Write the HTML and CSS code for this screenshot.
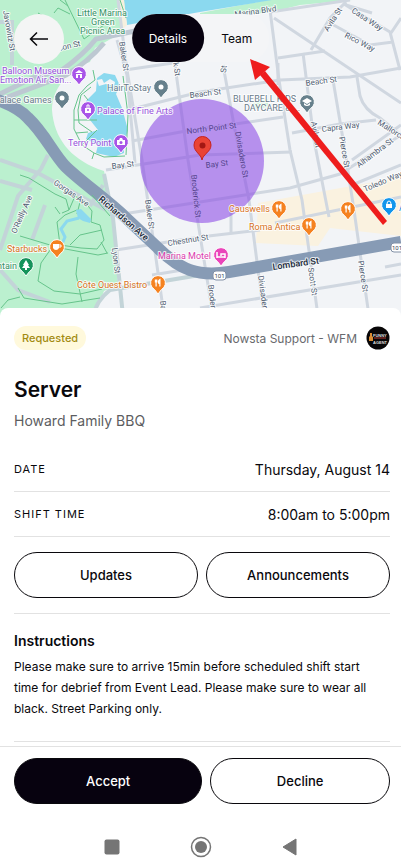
FILE: index.html
```html
<!DOCTYPE html>
<html lang="en">
<head>
<meta charset="utf-8">
<meta name="viewport" content="width=device-width, initial-scale=1">
<title>Shift details</title>
<link rel="stylesheet" href="styles.css">
</head>
<body>
<header class="hero">
  <svg class="map" viewBox="0 0 401 316" role="img" aria-label="Map of the shift location">
    <defs>
      <g id="fork"><path d="M-2.600 -3.500v3M-1.200 -3.500v3M-1.900 -3.500v7M1.900 3.500v-7c-1.500 1-1.500 3-1 4h1" fill="none" stroke="#fff" stroke-width="1.200"/></g>
      <path id="pin" d="M0 11L-3.500 6.500A7.400 7.400 0 1 1 3.500 6.500Z"/>
    </defs>
    <rect width="401" height="316" fill="#f2f4f7"/>
    <!-- parks, sand and water -->
    <path class="park" d="M0 0H126L121 33L95 48L90 62C70 68 52 88 52 110C54 138 70 158 98 169L104 171L113 216L118 285L104 291L94 316H0Z"/>
    <path class="park" d="M268 0H352L300 5L272 12L200 20V13Z"/>
    <path class="water" d="M124 0H272L200 12L127 25Z"/>
    <path d="M124 0L127 25L122 30L119 0Z" fill="#f6f0df"/>
    <path class="sand" d="M258 203L401 177V236L330 228L318 246L256 243Z"/>
    <path d="M252 102l16-3v8l-12 2z" fill="#cdf3da"/>
    <path class="water" d="M97 78L104 73L115 75L120 86L116 94L122 108L128 130L124 143L124 153L114 157L96 153L98 145L86 139L88 133L98 130L90 120L86 101L96 91Z"/>
    <path d="M97 80l5-1 2 4 6-4 5 3-1 4-8-2-7 2z" fill="#f2f4f7"/>
    <!-- streets -->
    <g class="street">
      <path d="M118 0L127 70L142 160L163 308M117 40L127 75L135 163M175 65L188 160L213 316M223 65L234 125L249 200L264 316M270 10L279 80L290 150L302 200L318 316M303 53L314 140L329 217M333 80L344 145L354 210L369 316"/>
      <path d="M125 70L173 63M128 110L200 92L280 80L350 77L401 68M132 141L186 131L235 124L283 117M106 170L200 155L292 152M110 216L200 202L290 188L340 174L401 135M116 250L200 237L260 230M152 275L195 268M292 133L340 124L376 120M275 223L401 197M200 308L401 275M278 58L325 51M270 12L350 0M231 232V210"/>
      <path d="M274 18L401 103M311 50L330 18L344 4L352 9L390 32L400 70M344 0L346 5L372 13M330 23L370 45L393 42M391 33L401 18M357 77L360 96Q364 110 380 118L401 135M352 160L401 125M352 185L401 165M278 85V63M385 267L401 264"/>
    </g>
    <g class="lane">
      <path d="M0 160L38 173L106 210M0 181L32 190M0 250L18 196L41 169L48 155M32 240L45 205M-5 264L18 290L50 302M94 316Q95 302 110 290L200 275M104 174L113 218L123 316M103 185L90 206M0 22H12V65"/>
    </g>
    <path class="road" d="M0 94L32 78L62 70Q83 55 96 39L140 30M0 100L66 75Q88 62 104 43"/>
    <path class="highway" d="M-5 99Q18 107 28 118C44 133 53 153 65 166C80 181 105 198 125 217L158 248C180 270 198 277 229 272L401 242"/>
    <g class="path">
      <path d="M65 0L84 39L104 25M54 13L58 8L70 14M60 0L68 6M38 13L50 20M20 175L29 178L55 194L66 199L69 210L62 213M69 210L75 196L85 202L92 211L91 222L100 225L104 240L97 249L81 248L60 245L57 222L65 215L77 210M77 214L80 202M20 236L60 248L98 255L108 253M70 245L80 235L102 230M101 242L107 253M53 246L41 263L38 281L54 291L80 294L102 289M78 257L76 274L82 302M18 288L24 298L62 304L100 298M55 207L60 214M92 195L110 216M120 0L126 18M1 308L8 300L20 297"/>
      <path d="M93 70L95 80L87 86L79 95L74 110L74 129L82 145L94 153L92 159M91 87L81 95L78 110L79 123L92 132M74 120L97 120M82 145L97 130M94 153L104 157L125 156M123 76L128 115L126 155M84 95l4 5M76 133L88 132"/>
    </g>
    <path class="water" d="M76 210L81 209L91 219L90 223L83 221L78 218Z"/>
    <path d="M79 218L67 221L61 229L65 237L62 244" fill="none" stroke="#8bd9ef" stroke-width="3"/>
    <!-- work area -->
    <circle cx="202" cy="161" r="62" fill="#8a48e6" fill-opacity=".58"/>
    <path d="M202 160C201 154 194 152 194 145A8.500 8.500 0 1 1 211 145C211 152 203 154 202 160Z" fill="#ea4335" stroke="#c5221f"/>
    <circle cx="202.500" cy="145.500" r="3" fill="#a31713"/>
    <!-- street names -->
    <g class="names">
      <text transform="translate(3 11) rotate(80)">Javowitz St</text>
      <text transform="translate(59 51) rotate(-13)">son St</text>
      <text transform="translate(119 42) rotate(81)">Baker St</text>
      <text transform="translate(173 63) rotate(80)">k St</text>
      <text transform="translate(226 73) rotate(-85)">St</text>
      <text transform="translate(235 17) rotate(-8)">Marina Blvd</text>
      <text transform="translate(328 32) rotate(-57)">Avila St</text>
      <text transform="translate(351 12) rotate(33)">Casa Way</text>
      <text transform="translate(344 37) rotate(27)">Rico Way</text>
      <text transform="translate(190 98) rotate(-7)">Beach St</text>
      <text transform="translate(306 86) rotate(-8)">Beach St</text>
      <g class="inside">
        <text transform="translate(187 134) rotate(-7)">North Point St</text>
        <text transform="translate(235 132) rotate(80)">Divisadero St</text>
        <text transform="translate(206 168) rotate(-7)">Bay St</text>
        <text transform="translate(191 175) rotate(84)">Broderick St</text>
      </g>
      <text transform="translate(112 169) rotate(-7)">Bay St</text>
      <text transform="translate(311 122) rotate(80)">Avila St</text>
      <text transform="translate(322 132) rotate(-7)">Capra Way</text>
      <text transform="translate(339 137) rotate(80)">Pierce St</text>
      <text transform="translate(377 124) rotate(32)">Mallorca</text>
      <text transform="translate(359 168) rotate(-37)">Alhambra St</text>
      <text transform="translate(365 192) rotate(-23)">Toledo Way</text>
      <text transform="translate(53 184) rotate(34)">Gorgas Ave</text>
      <text transform="translate(16 234) rotate(-66)">O'Reilly Ave</text>
      <text class="major" transform="translate(98 200) rotate(41)">Richardson Ave</text>
      <text transform="translate(145 200) rotate(82)">Baker St</text>
      <text transform="translate(168 246) rotate(-9)">Chestnut St</text>
      <text transform="translate(112 248) rotate(84)">Lyon St</text>
      <text class="major" transform="translate(273 270) rotate(-8)">Lombard St</text>
      <text transform="translate(160 301) rotate(84)">Baker St</text>
      <text transform="translate(208 285) rotate(83)">Broderick St</text>
      <text transform="translate(258 276) rotate(82)">Divisadero St</text>
      <text transform="translate(308 268) rotate(82)">Scott St</text>
      <text transform="translate(358 261) rotate(81)">Pierce St</text>
    </g>
    <!-- places -->
    <g class="places">
      <g class="green"><text x="77" y="16">Little Marina</text><text x="91" y="25">Green</text><text x="80" y="34">Picnic Area</text><text x="-18" y="269">Fountain</text></g>
      <g class="purple"><text x="2" y="74">Balloon Museum</text><text x="0" y="83">Emotion Air San...</text><text x="97" y="114">Palace of Fine Arts</text><text x="68" y="146">Terry Point</text></g>
      <g class="gray"><text x="107" y="91">HairToStay</text><text x="-6" y="103">Palace Games</text><text x="233" y="102">BLUEBELL KIDS</text><text x="244" y="111">DAYCARE &amp; ...</text></g>
      <g class="orange"><text x="7" y="252">Starbucks</text><text x="77" y="288">Côte Ouest Bistro</text><text x="229" y="212">Causwells</text><text x="249" y="230">Roma Antica</text></g>
      <text class="pink" x="158" y="259">Marina Motel</text><text class="blue" x="399" y="211">Apple</text>
    </g>
    <g class="pins">
      <g transform="translate(79 74)"><use href="#pin" fill="#a855e8"/><path d="M-4-1L0-4L4-1ZM-3 0h6v4h-6Z" fill="#fff"/><path d="M-1 4V1h2v3" fill="#a855e8"/></g>
      <g transform="translate(88 109)"><use href="#pin" fill="#a855e8"/><path d="M-3-1h6v5h-6Z" fill="#fff"/><path d="M-1-1v-3h2v3" fill="none" stroke="#fff"/><circle cy="1" r="1" fill="#a855e8"/></g>
      <g transform="translate(121 142)"><use href="#pin" fill="#a855e8"/><path d="M-4-2h2l1-2h2l1 2h2v5h-8Z" fill="#fff"/><circle r="1.500" cy=".5" fill="#a855e8"/></g>
      <g transform="translate(161 87)"><use href="#pin" fill="#66808c"/><circle r="2.500" fill="#fff"/></g>
      <g transform="translate(62 98)"><use href="#pin" fill="#66808c"/><circle r="2.500" fill="#fff"/></g>
      <g transform="translate(307 102)"><use href="#pin" fill="#66808c"/><path d="M-5-1L0-4L5-1L0 2ZM-3 1v2q3 2 6 0V1L0 3Z" fill="#fff"/></g>
      <g transform="translate(57 247)"><use href="#pin" fill="#f58220"/><path d="M-4-3h6v4q-1 2-3 2t-3-2Z" fill="#fff"/><path d="M2-2h2v2H2" fill="none" stroke="#fff"/></g>
      <g transform="translate(26 265)"><use href="#pin" fill="#16935b"/><path d="M0-5L3 0H2L4 3H1v2h-2V3h-3l2-3h-1Z" fill="#fff"/></g>
      <g transform="translate(158 283)"><use href="#pin" fill="#f58220"/><use href="#fork"/></g>
      <g transform="translate(279 208)"><use href="#pin" fill="#f58220"/><use href="#fork"/></g>
      <g transform="translate(309 225)"><use href="#pin" fill="#f58220"/><use href="#fork"/></g>
      <g transform="translate(348 209)"><use href="#pin" fill="#f58220"/><use href="#fork"/></g>
      <g transform="translate(221 255)"><use href="#pin" fill="#ea45ba"/><path d="M-4-3v6M-4 2H4M4 3V-1H0V1" fill="none" stroke="#fff" stroke-width="1.500"/></g>
      <g transform="translate(389 205)"><use href="#pin" fill="#1296ec"/><path d="M-3-1h6v4h-6Z" fill="#fff"/><path d="M-2-1q0-3 2-3t2 3" fill="none" stroke="#fff"/></g>
    </g>
    <g class="shields"><rect x="213" y="271" width="13" height="9" rx="3"/><text x="219.500" y="278">101</text><rect x="391" y="243" width="13" height="9" rx="3"/><text x="397" y="250">101</text></g>
  </svg>
  <a class="back" href="#back" aria-label="Back">
    <svg viewBox="0 0 20 16" width="20" height="16"><path d="M19 8H1.500M8 1.500L1.500 8L8 14.500"/></svg>
  </a>
  <nav class="tabs" aria-label="Shift sections">
    <button class="tab tab-active" type="button">Details</button>
    <button class="tab" type="button">Team</button>
  </nav>
  <svg class="arrow" viewBox="0 0 401 316" aria-hidden="true"><path d="M383 225L260 75L265 71L387 221Z"/><path d="M250 59L270 67L255 80Z"/></svg>
</header>

<main class="sheet">
  <div class="status">
    <span class="badge">Requested</span>
    <span class="company">Nowsta Support - WFM
      <svg class="avatar" viewBox="0 0 24 24" width="24" height="24" aria-hidden="true">
        <circle cx="12" cy="12" r="11.500" fill="#080607"/>
        <path d="M4 7h2v3l1 1v4H3v-4l1-1Z" fill="#d98b32"/>
        <text x="7" y="11">FUNNY</text><text x="7" y="18">AGENT</text>
        <path d="M8 12h12" stroke="#b73a35"/>
      </svg>
    </span>
  </div>
  <h1>Server</h1>
  <p class="event">Howard Family BBQ</p>
  <dl class="facts">
    <div class="fact"><dt>Date</dt><dd>Thursday, August 14</dd></div>
    <div class="fact"><dt>Shift time</dt><dd>8:00am to 5:00pm</dd></div>
  </dl>
  <div class="links">
    <button class="pill" type="button">Updates</button>
    <button class="pill" type="button">Announcements</button>
  </div>
  <section class="instructions">
    <h2>Instructions</h2>
    <p>Please make sure to arrive 15min before scheduled shift start time for debrief from Event Lead. Please make sure to wear all black. Street Parking only.</p>
  </section>
</main>

<footer>
  <div class="decision">
    <button class="pill pill-dark" type="button">Accept</button>
    <button class="pill" type="button">Decline</button>
  </div>
  <nav class="system" aria-label="System">
    <button type="button" aria-label="Recent apps"><svg viewBox="0 0 22 22" width="22" height="22"><rect x="3.500" y="3.500" width="15" height="15" rx="2"/></svg></button>
    <button type="button" aria-label="Home"><svg viewBox="0 0 22 22" width="22" height="22"><circle cx="11" cy="11" r="9.500" fill="none" stroke="#757575" stroke-width="1.500"/><circle cx="11" cy="11" r="6"/></svg></button>
    <button type="button" aria-label="System back"><svg viewBox="0 0 22 22" width="22" height="22"><path d="M4 11L17 3V19Z" stroke="#757575" stroke-linejoin="round"/></svg></button>
  </nav>
</footer>
</body>
</html>
```
FILE: styles.css
```css
* { box-sizing: border-box; }
body {
  margin: 0;
  min-height: 100vh;
  display: flex;
  flex-direction: column;
  background: #fff;
  color: #09080c;
  font-family: Inter, "Liberation Sans", sans-serif;
  font-size: 14px;
}
h1, h2, p, dl, dd { margin: 0; }
button { font: inherit; color: inherit; cursor: pointer; }

.hero { position: relative; }
.map { display: block; width: 100%; height: auto; }
.park { fill: #bbf0cf; }
.water { fill: #8bd9ef; }
.sand { fill: #faf2e0; }
.street { fill: none; stroke: #d0d7e0; stroke-width: 3; }
.lane { fill: none; stroke: #c3d4d8; stroke-width: 4; }
.road { fill: none; stroke: #bdc8d2; stroke-width: 5; }
.highway { fill: none; stroke: #879bb5; stroke-width: 12; }
.path { fill: none; stroke: #66c48b; stroke-width: 1; }
.names, .places { font-family: Roboto, sans-serif; stroke: #fff; stroke-opacity: .8; stroke-width: 2; paint-order: stroke; stroke-linejoin: round; }
.names { font-size: 8px; fill: #505d72; }
.names .major { font-size: 9px; font-weight: 500; fill: #202939; }
.names .inside { fill: #54428c; stroke: #b795ee; }
.places { font-size: 9px; }
.green { fill: #399268; }
.purple { fill: #9651dc; }
.gray { fill: #6a7c8b; }
.orange { fill: #d9731c; }
.pink { fill: #dd3bad; }
.blue { fill: #1788dc; }
.pins use { stroke: #fff; stroke-width: 1; }
.shields rect { fill: #fff; stroke: #8190a6; }
.shields text { font: 6px Roboto, sans-serif; fill: #3d4859; text-anchor: middle; }

.back {
  position: absolute;
  top: 14px;
  left: 14px;
  width: 50px;
  height: 50px;
  border-radius: 50%;
  display: grid;
  place-items: center;
  background: #f4f5f5;
}
.back svg { fill: none; stroke: #09080c; stroke-width: 1.5; }
.tabs {
  position: absolute;
  top: 14px;
  left: 50%;
  transform: translateX(-50%);
  display: flex;
  border-radius: 25px;
  background: #f4f5f7;
}
.tab { height: 48px; padding: 0 17px; border: 0; border-radius: 24px; background: none; font-size: 12px; }
.tab-active { background: #07020f; color: #fff; }
.arrow { position: absolute; top: 0; left: 0; width: 100%; fill: #ee1d1d; }

.sheet { position: relative; flex: 1; margin-top: -8px; padding: 16px 11px 0 14px; border-radius: 8px 8px 0 0; background: #fff; }
.status { display: flex; justify-content: space-between; align-items: center; height: 28px; }
.badge { padding: 0 8px; border-radius: 12px; background: #fff9dc; color: #a28b12; font-size: 11px; font-weight: 500; line-height: 24px; }
.company { display: flex; align-items: center; gap: 9px; color: #696a6e; font-size: 12px; }
.avatar text { font: bold 4px "Liberation Sans", sans-serif; fill: #ddd; }
h1 { margin-top: 22px; font-size: 21px; font-weight: 600; line-height: 32px; }
.event { margin-top: 3px; color: #5c5d61; line-height: 24px; }
.facts { margin-top: 14px; }
.fact { display: flex; justify-content: space-between; align-items: center; height: 45px; border-bottom: 1px solid #e2e2e2; }
dt { font-size: 11px; letter-spacing: 1px; text-transform: uppercase; }
.links { display: grid; grid-template-columns: 1fr 1fr; gap: 8px; padding: 15px 0; border-bottom: 1px solid #e2e2e2; }
.pill { height: 46px; border: 1px solid #09080c; border-radius: 23px; background: #fff; font-size: 13px; font-weight: 500; }
.pill-dark { background: #07020f; color: #fff; }
.instructions { padding: 16px 0 22px; border-bottom: 1px solid #e2e2e2; }
h2 { font-size: 14px; font-weight: 600; line-height: 22px; }
.instructions p { margin-top: 4px; padding-right: 12px; font-size: 12px; line-height: 21px; }

footer { border-top: 1px solid #e2e2e2; background: #fff; }
.decision { display: grid; grid-template-columns: 22fr 21fr; gap: 8px; padding: 11px 11px 0 14px; }
.system { display: flex; justify-content: center; gap: 67px; padding: 32px 0 5px; }
.system button { display: grid; padding: 0; border: 0; background: none; }
.system svg { fill: #757575; }
```
